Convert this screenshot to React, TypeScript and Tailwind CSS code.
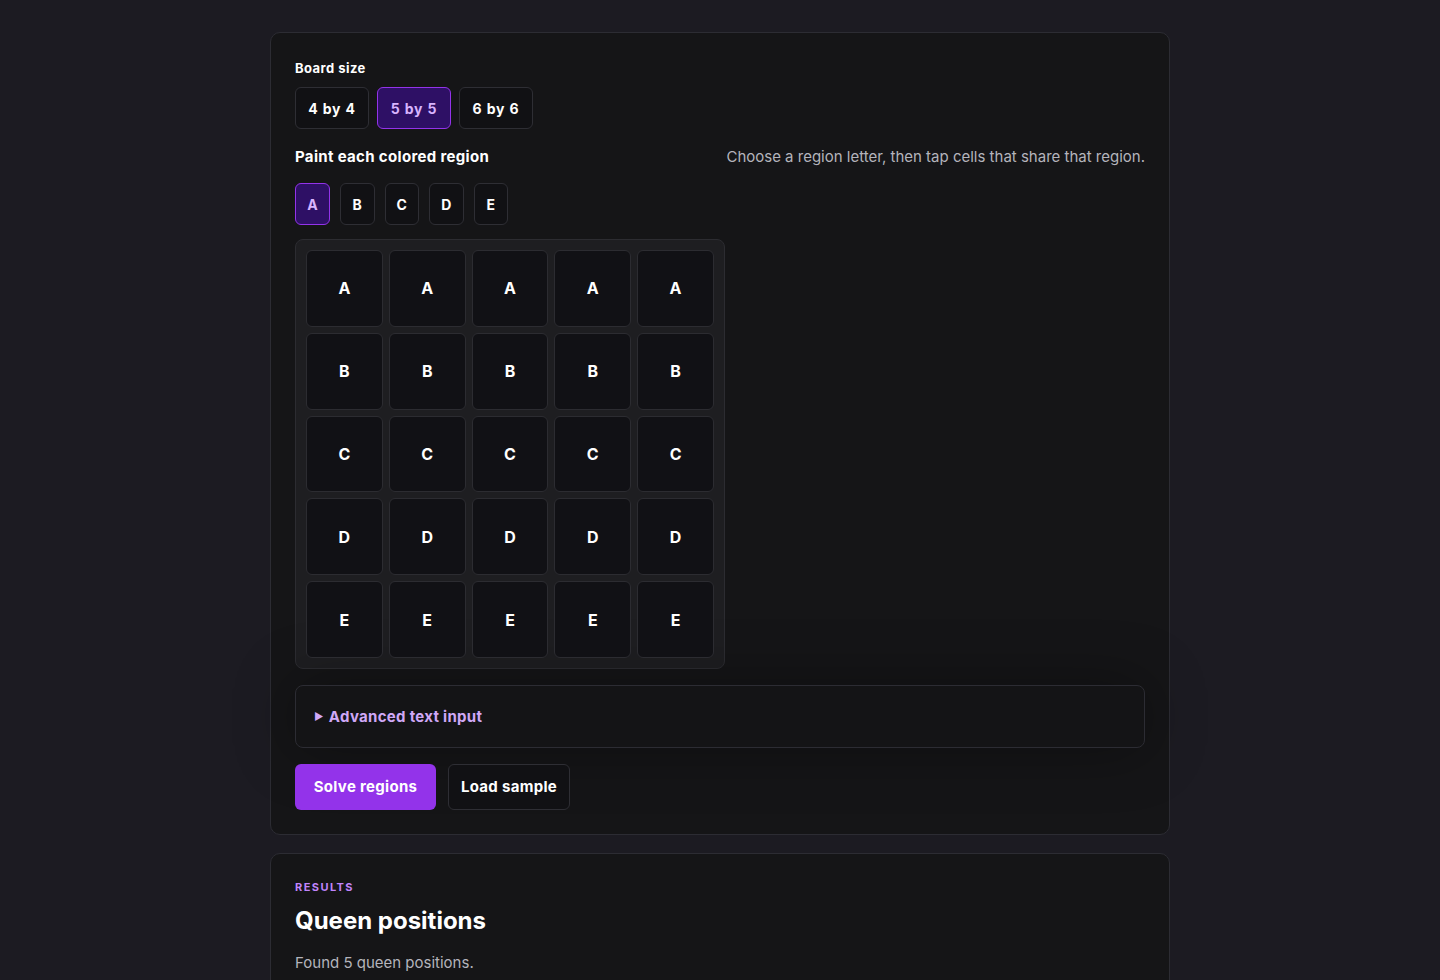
import React, { useState } from "react";

const font = { fontFamily: "Inter, 'Noto Sans', sans-serif" };

export default function App() {
  const [size, setSize] = useState(5);
  const [region, setRegion] = useState("A");
  const letters = ["A", "B", "C", "D", "E"];
  return (
    <div className="min-h-screen bg-[#1c1b22] pt-8 pb-10" style={font}>
      <div className="mx-auto w-[900px] flex flex-col gap-[18px]">
        <div className="rounded-[10px] border border-[#2c2c33] bg-[#151517] px-6 pt-6 pb-6">
          <div className="text-[13px] font-bold tracking-[0.035em] text-white leading-5 pt-px">Board size</div>
          <div className="mt-[9px] flex gap-2">
            {[4, 5, 6].map((n) => (
              <button
                key={n}
                onClick={() => setSize(n)}
                className={
                  n === size
                    ? "h-[42px] w-[74px] rounded-[6px] border border-[#9333ea] bg-[#2e1065] text-[14px] font-bold tracking-[0.06em] text-[#d8b4fe]"
                    : "h-[42px] w-[74px] rounded-[6px] border border-[#2e2e34] bg-[#111114] text-[14px] font-bold tracking-[0.06em] text-white"
                }
              >
                {n} by {n}
              </button>
            ))}
          </div>
          <div className="mt-4 flex items-center justify-between leading-6">
            <div className="text-[15px] font-bold tracking-[0.022em] text-white">Paint each colored region</div>
            <div className="text-[15px] text-[#b4b4bc]">Choose a region letter, then tap cells that share that region.</div>
          </div>
          <div className="mt-[14px] flex gap-[10px]">
            {letters.map((l) => (
              <button
                key={l}
                onClick={() => setRegion(l)}
                className={
                  l === region
                    ? "h-[42px] w-[35px] rounded-[6px] border border-[#9333ea] bg-[#2e1065] text-[14px] font-bold text-[#d8b4fe]"
                    : "h-[42px] w-[34.5px] rounded-[6px] border border-[#2e2e34] bg-[#111114] text-[14px] font-bold text-white"
                }
              >
                {l}
              </button>
            ))}
          </div>
          <div className="mt-[14px] w-[430px] rounded-[8px] border border-[#2c2c31] bg-[#1e1e21] p-[10px]">
            <div className="grid grid-cols-5 gap-[6px]">
              {letters.map((row) =>
                letters.map((_, c) => (
                  <div
                    key={row + c}
                    className="flex aspect-square items-center justify-center rounded-[6px] border border-[#2c2c31] bg-[#111115] text-[16px] font-bold text-white"
                  >
                    {row}
                  </div>
                ))
              )}
            </div>
          </div>
          <div className="mt-4 rounded-[8px] border border-[#2c2c33] bg-[#141416] px-[18px] py-[20px] shadow-[0_0_60px_rgba(0,0,0,0.35)]">
            <div className="flex items-center gap-[5px] text-[15px] font-bold leading-[21px] tracking-[0.02em] text-[#d0a8f7]">
              <span className="text-[10px]">▶</span>
              <span>Advanced text input</span>
            </div>
          </div>
          <div className="mt-4 flex gap-3">
            <button className="h-[46px] w-[141px] rounded-[6px] bg-[#9333ea] text-[15px] font-bold tracking-[0.02em] text-white">Solve regions</button>
            <button className="h-[46px] w-[122px] rounded-[6px] border border-[#2e2e34] bg-[#111114] text-[15px] font-bold tracking-[0.02em] text-white">Load sample</button>
          </div>
        </div>
        <div className="rounded-[10px] border border-[#2c2c33] bg-[#151517] px-6 pt-[25px] pb-6">
          <div className="text-[11px] font-bold tracking-[0.13em] text-[#c084fc] leading-4">RESULTS</div>
          <div className="mt-[10px] text-[24px] font-bold text-white leading-8">Queen positions</div>
          <div className="mt-[14px] text-[15px] text-[#b4b4bc] leading-6">Found 5 queen positions.</div>
        </div>
      </div>
    </div>
  );
}
